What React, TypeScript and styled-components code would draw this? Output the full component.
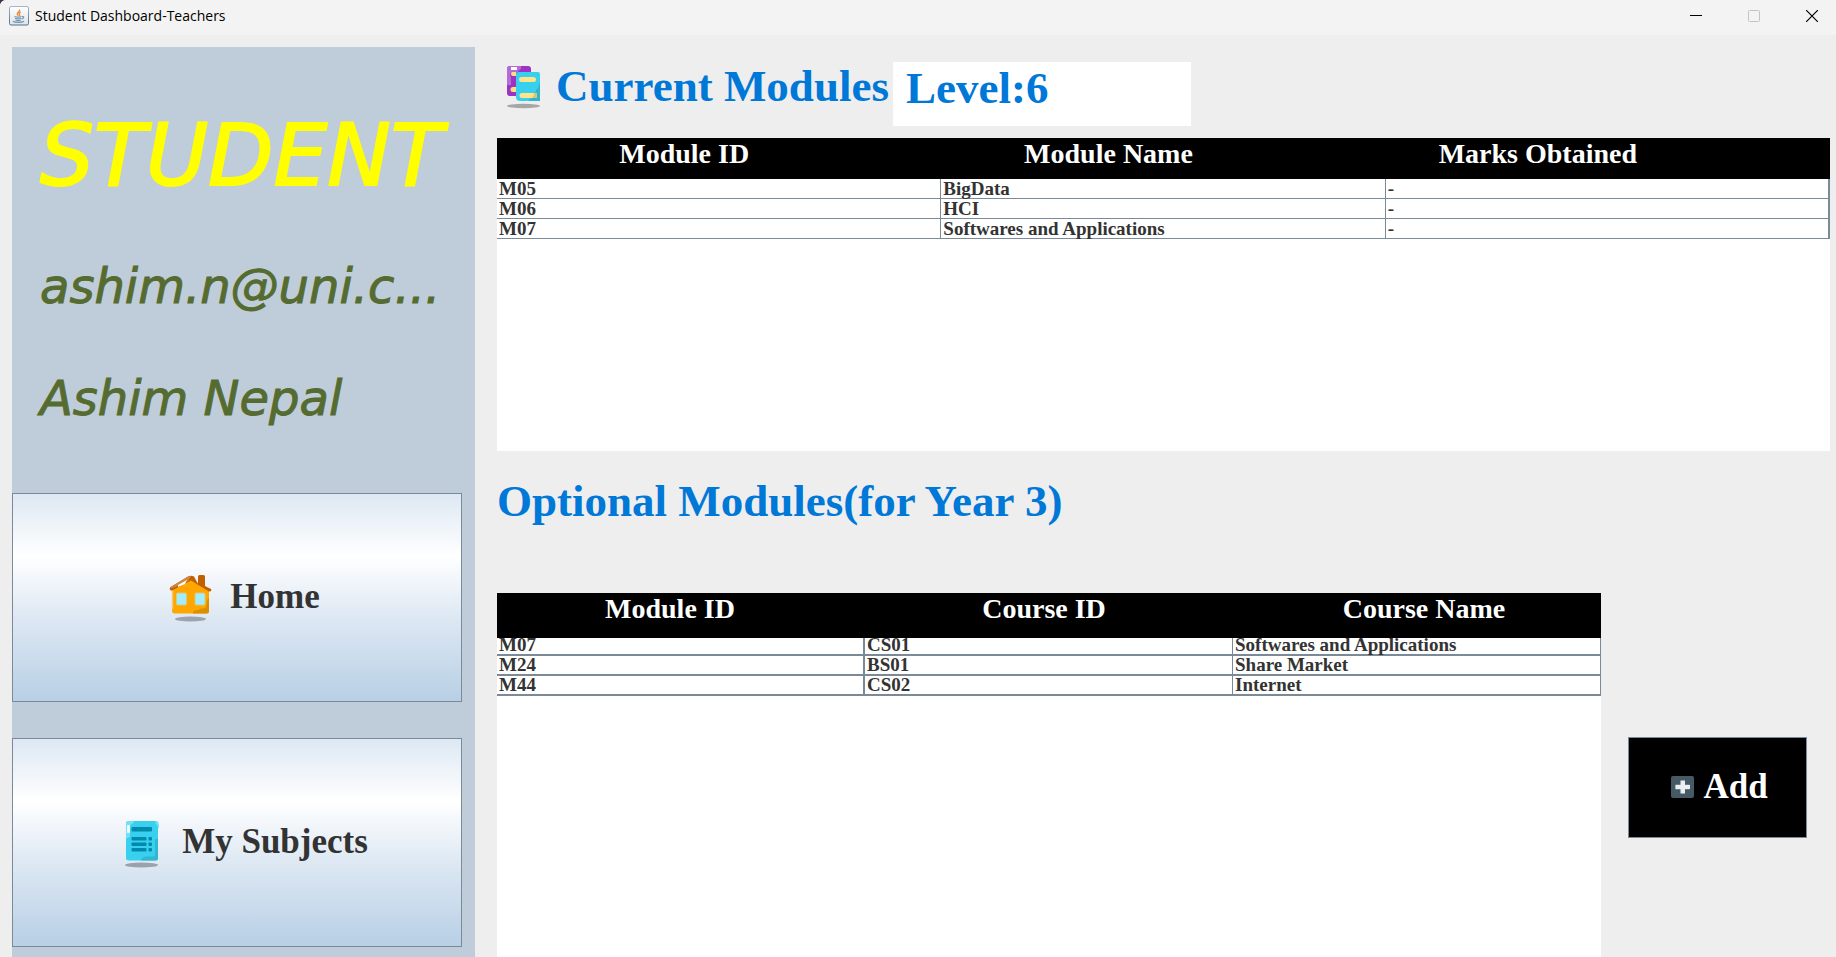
import React from "react";
import styled, { createGlobalStyle } from "styled-components";

const LINE = "#7a8a99";
const BLUE = "#0078d7";
const SERIF = '"Times New Roman", "Liberation Serif", serif';
const SCRIPT = '"Lucida Handwriting", "DejaVu Sans", sans-serif';

const GlobalStyle = createGlobalStyle`
  *, *::before, *::after { box-sizing: border-box; }
  body { margin: 0; background: #3a3542; font-family: ${SERIF}; }
`;

const Window = styled.div`
  display: flex;
  flex-direction: column;
  min-height: 100vh;
  background: #eeeeee;
  border-top-left-radius: 6px;
  overflow: hidden;
`;

const TitleBar = styled.header`
  display: flex;
  align-items: center;
  height: 35px;
  padding: 0 0 4px 9px;
  gap: 6px;
  background: #f3f3f3;
`;

const WindowTitle = styled.span`
  flex: 1;
  font-family: "Segoe UI", "Open Sans", sans-serif;
  font-size: 14px;
  color: #000;
`;

const WindowControls = styled.div`
  display: flex;
  gap: 10px;
`;

const WindowButton = styled.button`
  display: flex;
  align-items: center;
  justify-content: center;
  width: 48px;
  height: 31px;
  padding: 0;
  border: 0;
  background: none;
`;

const Body = styled.div`
  flex: 1;
  display: flex;
  padding: 12px 6px 0 12px;
  gap: 22px;
`;

const Sidebar = styled.aside`
  flex: 0 0 463px;
  display: flex;
  flex-direction: column;
  padding: 35px 13px 10px 0;
  background: #bfccda;
`;

const Role = styled.h1`
  margin: 0;
  padding-left: 28px;
  overflow: hidden;
  font: italic 85px/148px ${SCRIPT};
  -webkit-text-stroke: 2px currentColor;
  color: #ffff00;
  white-space: nowrap;
`;

const Identity = styled.p`
  margin: 0;
  padding-left: 28px;
  font: italic 48px/112px ${SCRIPT};
  -webkit-text-stroke: 1px currentColor;
  color: #556b2f;
  white-space: nowrap;
`;

const Nav = styled.nav`
  display: flex;
  flex-direction: column;
  gap: 36px;
  margin-top: 39px;
`;

const NavButton = styled.button`
  display: flex;
  align-items: center;
  justify-content: center;
  gap: 6px;
  height: 209px;
  padding: 0 0 2px 0;
  border: 1px solid ${LINE};
  background: linear-gradient(#dde8f3 0%, #ffffff 30%, #dde8f3 60%, #b8cfe5 100%);
  font: bold 35px/40px ${SERIF};
  color: #333;
`;

const Main = styled.main`
  flex: 1;
  min-width: 0;
  display: flex;
  flex-direction: column;
  padding-top: 15px;
`;

const HeadingRow = styled.div`
  display: flex;
  align-items: flex-start;
  margin-bottom: 12px;
`;

const Heading = styled.h2`
  display: flex;
  margin: 0;
  font: bold 45px/48px ${SERIF};
  color: ${BLUE};
  white-space: nowrap;
`;

const CurrentHeading = styled(Heading)`
  flex: 0 0 396px;
`;

const OptionalHeading = styled(Heading)`
  margin: 26px 0 68px;
`;

const LevelField = styled.input`
  width: 298px;
  height: 64px;
  padding: 0 13px 12px;
  border: 0;
  background: #fff;
  font: bold 45px/52px ${SERIF};
  color: ${BLUE};
  outline: none;
`;

const CurrentPanel = styled.section`
  height: 313px;
  background: #fff;
`;

const OptionalRow = styled.div`
  flex: 1;
  display: flex;
  align-items: flex-start;
  gap: 27px;
  padding-right: 23px;
`;

const OptionalPanel = styled.section`
  flex: 1;
  align-self: stretch;
  background: #fff;
`;

const Table = styled.table`
  width: 100%;
  table-layout: fixed;
  border-collapse: separate;
  border-spacing: 0;
`;

const HeadCell = styled.th<{ $height: number; $before: number; $after: number }>`
  height: ${(p) => p.$height}px;
  padding: 0 ${(p) => p.$after}px 0 ${(p) => p.$before}px;
  background: #000;
  color: #fff;
  font: bold 28px/32px ${SERIF};
  text-align: center;
  vertical-align: top;
  white-space: nowrap;
`;

const Cell = styled.td<{ $rule: number; $edge: number }>`
  height: 20px;
  padding: 0 0 0 2px;
  border-right: ${(p) => p.$edge}px solid ${LINE};
  border-bottom: ${(p) => p.$rule}px solid ${LINE};
  font: bold 19px/${(p) => 20 - p.$rule}px ${SERIF};
  color: #333;
  white-space: nowrap;
`;

/* A body scrolled slightly under its header shows a shortened first row. */
const TableBody = styled.tbody<{ $scrolled: boolean }>`
  tr:first-child td {
    ${(p) => p.$scrolled && "height: 18px; line-height: 14px; vertical-align: top;"}
  }
`;

const AddButton = styled.button`
  display: flex;
  align-items: center;
  justify-content: center;
  gap: 9px;
  width: 179px;
  height: 101px;
  margin-top: 144px;
  padding: 0 0 2px 4px;
  border: 1px solid ${LINE};
  background: #000;
  font: bold 35px/40px ${SERIF};
  color: #fff;
`;

type Column = { label: string; edge: number; before?: number; after?: number };

type GridProps = {
  label: string;
  columns: Column[];
  rows: string[][];
  headHeight: number;
  rule: number;
  scrolled?: boolean;
};

function ModuleTable({ label, columns, rows, headHeight, rule, scrolled = false }: GridProps) {
  return (
    <Table aria-label={label}>
      <thead>
        <tr>
          {columns.map((c) => (
            <HeadCell key={c.label} scope="col" $height={headHeight} $before={c.before ?? 0} $after={c.after ?? 0}>
              {c.label}
            </HeadCell>
          ))}
        </tr>
      </thead>
      <TableBody $scrolled={scrolled}>
        {rows.map((row) => (
          <tr key={row[0]}>
            {row.map((value, i) => (
              <Cell key={i} $rule={rule} $edge={columns[i].edge}>
                {value}
              </Cell>
            ))}
          </tr>
        ))}
      </TableBody>
    </Table>
  );
}

const JavaIcon = () => (
  <svg width="20" height="20" viewBox="0 0 20 20" aria-hidden="true">
    <defs>
      <linearGradient id="java-bg" x1="0" y1="0" x2="0" y2="1">
        <stop offset="0" stopColor="#fff" />
        <stop offset="1" stopColor="#dfe3e7" />
      </linearGradient>
      <linearGradient id="java-edge" x1="0" y1="0" x2="0" y2="1">
        <stop offset="0" stopColor="#9fb8cb" />
        <stop offset="1" stopColor="#50708a" />
      </linearGradient>
    </defs>
    <rect x="0.5" y="0.5" width="19" height="18.5" rx="1.5" fill="url(#java-bg)" stroke="url(#java-edge)" />
    <path d="M10.500 3.500c1 2-2.800 2.800-2.200 4.700.2.700.8 1.200 1.200 1.600M11.800 5.800c-2 1-2 1.700-1.200 2.600.4.600 0 1.200-.5 1.500" fill="none" stroke="#ea8a3c" strokeWidth="1.300" />
    <path d="M5.500 10.500c2 .8 5 .8 7 0M6 12.300c2 .8 4.500.8 6.200 0M6.500 14c1.800.7 3.800.7 5.300 0M4 15.200c2 1.600 8.500 1.600 11 0M13 10.500c2.500-.3 2 2-.3 2.500" fill="none" stroke="#6f93b3" strokeWidth="1.200" />
  </svg>
);

const BooksIcon = () => (
  <svg width="59" height="48" viewBox="0 0 59 48" aria-hidden="true">
    <ellipse cx="26.500" cy="44" rx="16.500" ry="2.200" fill="#a6a6a6" />
    <rect x="10" y="4" width="24" height="30" rx="3" fill="#9c33c4" />
    <path d="M13 4h11v3c-2 1-3 2-4 4h-6c-1 0-1 4 0 4v8h-4V7a3 3 0 0 1 3-3Z" fill="#b56bd6" />
    <rect x="14" y="5" width="6" height="3" fill="#fff" />
    <path d="M19 10v4h-3a2 2 0 0 1 0-4ZM19 25v5h-3a2.500 2.500 0 0 1 0-5Z" fill="#ffe082" />
    <path d="M22 10h19a2 2 0 0 1 2 2v25.500l-2 1.500H23a4 4 0 0 1-4-4V13a3 3 0 0 1 3-3Z" fill="#37d0ee" />
    <path d="M43 21v18H32c-.5-2 1-3 5-3 2-2 1-8 3-9 2-1 1-5 3-6Z" fill="#31b5cc" />
    <rect x="22" y="15" width="17" height="5" rx="2.500" fill="#ffe48a" />
    <path d="M25 31h14v3c0 2-1 2-3 2H25a2.500 2.500 0 0 1 0-5Z" fill="#ffe48a" />
    <path d="M37 31h3v5h-5c1-1 2-2 2-5Z" fill="#d9c476" />
  </svg>
);

const HomeIcon = () => (
  <svg width="70" height="70" viewBox="0 0 70 70" aria-hidden="true">
    <ellipse cx="36.500" cy="57" rx="15.500" ry="2.500" fill="#9ba4ae" />
    <path d="M19 26 37 17l18 10v22a2.500 2.500 0 0 1-2.500 2.500h-32A2.500 2.500 0 0 1 18 49V27Z" fill="#ffa600" />
    <path d="M18.500 27v20" stroke="#f5c877" strokeWidth="1.500" />
    <path d="M55 36v13a2.500 2.500 0 0 1-2.500 2.500H39c0-3 2-3.500 6-3.500 1-2 3-1 6-2 3-1 0-8 4-10Z" fill="#db8f00" />
    <path d="M44 22v-7.500a1.500 1.500 0 0 1 1.500-1.500h4a1.500 1.500 0 0 1 1.500 1.500V24l6 3c1 1 0 3-2 2.500L37 18.500 18 28.500c-2 .5-3-2-1.500-3.500L34 14.500q3-1.500 6 0Z" fill="#c06000" />
    <path d="M16.500 25.500 34 14.500q1.500-.8 3-.5L34 19l-13 6-4 1.500Z" fill="#cf8748" />
    <path d="m24 23 9-5-2 4-7 3Z" fill="#fff" />
    <rect x="22.500" y="31" width="10" height="12" rx="1" fill="#9fedff" stroke="#ddc874" />
    <rect x="41" y="31" width="10" height="12" rx="1" fill="#9fedff" stroke="#ddc874" />
  </svg>
);

const SubjectsIcon = () => (
  <svg width="70" height="70" viewBox="0 0 70 70" aria-hidden="true">
    <ellipse cx="35.500" cy="58" rx="16.500" ry="2.500" fill="#9aa3ab" />
    <rect x="20" y="14" width="32" height="39.500" rx="2.500" fill="#37d0ee" />
    <path d="M20 32V16.500A2.500 2.500 0 0 1 22.500 14H28c0 3-3 3-4 5v10c0 2-3 1-4 3ZM49 14h2c2 1 2 4 2 7-2 0-1-3-3-4Z" fill="#74e0f5" />
    <rect x="21" y="18" width="3" height="8" rx="1" fill="#eaffff" />
    <path d="M52 31v20a2.500 2.500 0 0 1-2.500 2.500H35c1-3 3-4 6-4h6c3 0 2-4 2-8V33c0-2 3 0 3-2Z" fill="#31b7d0" />
    <g fill="#0089ad">
      <rect x="25.500" y="20" width="20.500" height="4.500" rx="1" />
      <rect x="25.500" y="30" width="15" height="3.500" rx="1" />
      <rect x="25.500" y="35.500" width="15" height="3.500" rx="1" />
      <rect x="25.500" y="41" width="15" height="3.500" rx="1" />
      <rect x="42.500" y="30" width="3.500" height="3.500" rx="1" />
      <rect x="42.500" y="35.500" width="3.500" height="3.500" rx="1" />
      <rect x="42.500" y="41" width="3.500" height="3.500" rx="1" />
    </g>
  </svg>
);

const PlusIcon = () => (
  <svg width="23" height="22" viewBox="0 0 23 22" aria-hidden="true">
    <rect width="23" height="22" rx="2" fill="#455a64" />
    <path d="M4.500 8.500h14v5h-14z" fill="#8d999f" />
    <path d="M9.500 4.500h4.500V9H19v4h-5v4.500H9.500V13h-5V9h5z" fill="#eceff1" />
  </svg>
);

const currentColumns: Column[] = [
  { label: "Module ID", edge: 1, after: 70 },
  { label: "Module Name", edge: 1, after: 110 },
  { label: "Marks Obtained", edge: 2, after: 140 },
];

const currentRows = [
  ["M05", "BigData", "-"],
  ["M06", "HCI", "-"],
  ["M07", "Softwares and Applications", "-"],
];

const optionalColumns: Column[] = [
  { label: "Module ID", edge: 2, after: 22 },
  { label: "Course ID", edge: 1, after: 10 },
  { label: "Course Name", edge: 1, before: 14 },
];

const optionalRows = [
  ["M07", "CS01", "Softwares and Applications"],
  ["M24", "BS01", "Share Market"],
  ["M44", "CS02", "Internet"],
];

export default function App() {
  return (
    <>
      <GlobalStyle />
      <Window>
        <TitleBar>
          <JavaIcon />
          <WindowTitle>Student Dashboard-Teachers</WindowTitle>
          <WindowControls>
            <WindowButton type="button" aria-label="Minimize">
              <svg width="12" height="12" viewBox="0 0 12 12">
                <path d="M0 5.500h12" stroke="#000" />
              </svg>
            </WindowButton>
            <WindowButton type="button" aria-label="Maximize" disabled>
              <svg width="12" height="12" viewBox="0 0 12 12">
                <rect x="0.500" y="0.500" width="11" height="11" rx="1" fill="none" stroke="#c4c4c4" />
              </svg>
            </WindowButton>
            <WindowButton type="button" aria-label="Close">
              <svg width="12" height="12" viewBox="0 0 12 12">
                <path d="m0 0 12 12M12 0 0 12" stroke="#000" strokeWidth="1.200" />
              </svg>
            </WindowButton>
          </WindowControls>
        </TitleBar>
        <Body>
          <Sidebar>
            <Role>STUDENT</Role>
            <Identity>ashim.n@uni.c...</Identity>
            <Identity>Ashim Nepal</Identity>
            <Nav>
              <NavButton type="button">
                <HomeIcon />
                Home
              </NavButton>
              <NavButton type="button">
                <SubjectsIcon />
                My Subjects
              </NavButton>
            </Nav>
          </Sidebar>
          <Main>
            <HeadingRow>
              <CurrentHeading>
                <BooksIcon />
                Current Modules
              </CurrentHeading>
              <LevelField aria-label="Level" readOnly value="Level:6" />
            </HeadingRow>
            <CurrentPanel>
              <ModuleTable label="Current Modules" columns={currentColumns} rows={currentRows} headHeight={41} rule={1} />
            </CurrentPanel>
            <OptionalHeading>Optional Modules(for Year 3)</OptionalHeading>
            <OptionalRow>
              <OptionalPanel>
                <ModuleTable label="Optional Modules" columns={optionalColumns} rows={optionalRows} headHeight={45} rule={2} scrolled />
              </OptionalPanel>
              <AddButton type="button">
                <PlusIcon />
                Add
              </AddButton>
            </OptionalRow>
          </Main>
        </Body>
      </Window>
    </>
  );
}
